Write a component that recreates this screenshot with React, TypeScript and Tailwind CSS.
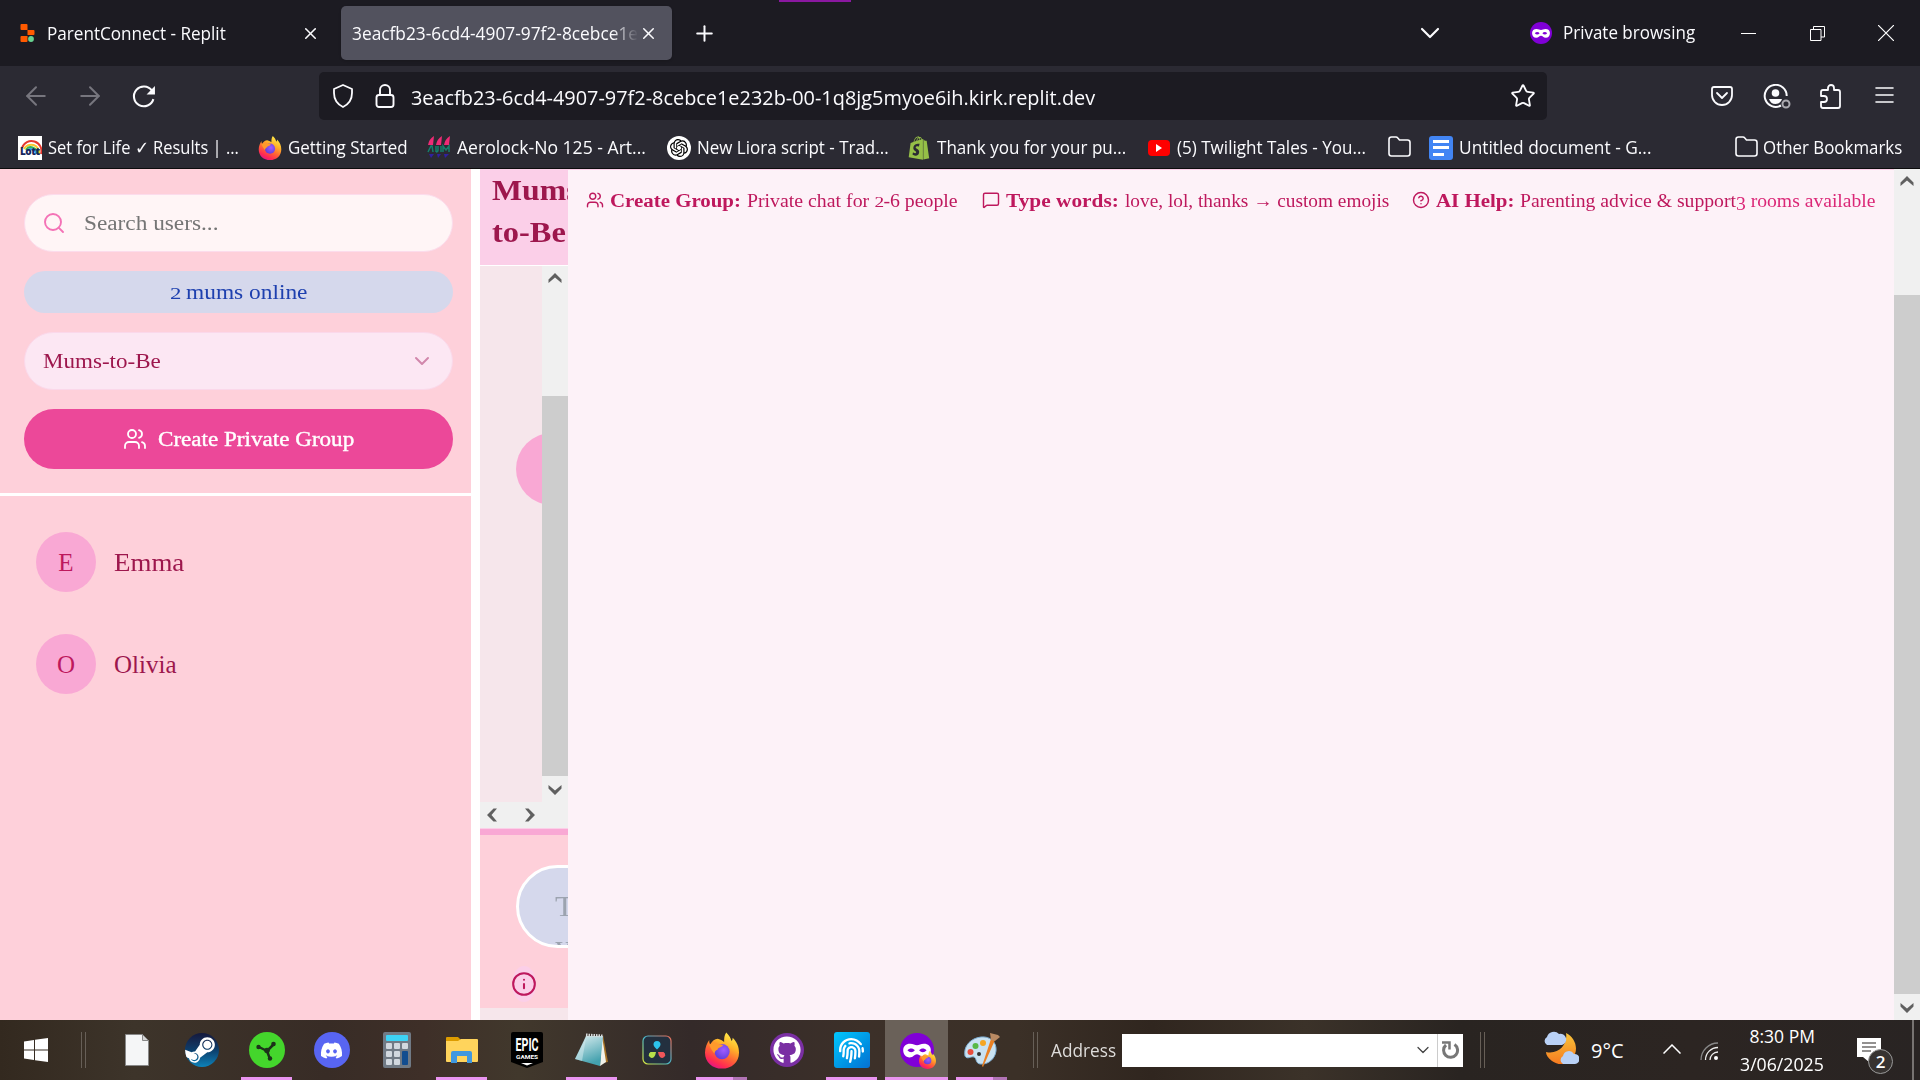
import { useLayoutEffect, useRef, type ReactNode } from "react";
import {
  Users, Search, ChevronDown, MessageSquare, CircleHelp, Info, Plus, X, ArrowLeft, ArrowRight, Star, Menu,
} from "lucide-react";
import { FaDiscord, FaGithub, FaShopify, FaSteamSymbol, FaFingerprint } from "react-icons/fa";
import { SiOpenai } from "react-icons/si";

/** A single line of text stretched to the width its class gives. */
function Fit({ className = "", children }: { className?: string; children: ReactNode }) {
  const outer = useRef<HTMLSpanElement>(null);
  const inner = useRef<HTMLSpanElement>(null);
  useLayoutEffect(() => {
    if (!outer.current || !inner.current) return;
    const ratio = outer.current.clientWidth / inner.current.offsetWidth;
    inner.current.style.transform = `scaleX(${ratio})`;
  }, []);
  return (
    <span ref={outer} className={`block shrink-0 whitespace-nowrap ${className}`}>
      <span ref={inner} className="inline-block origin-left">{children}</span>
    </span>
  );
}

function Firefox({ className }: { className: string }) {
  return (
    <svg viewBox="0 0 32 34" className={className}>
      <defs>
        <linearGradient id="fxBody" x1="0.8" y1="0" x2="0.3" y2="1">
          <stop offset="0" stopColor="#fff44f" />
          <stop offset="0.35" stopColor="#ffb329" />
          <stop offset="0.6" stopColor="#ff6a33" />
          <stop offset="0.85" stopColor="#ff2a52" />
          <stop offset="1" stopColor="#e31587" />
        </linearGradient>
        <radialGradient id="fxGlobe" cx="0.6" cy="0.4" r="0.7">
          <stop offset="0" stopColor="#a05cff" />
          <stop offset="1" stopColor="#5a3bd6" />
        </radialGradient>
      </defs>
      <path d="M20 0c3 3 4 5 5 8 1-1 1-2 1-3 4 4 6 8 6 14 0 9-7 15-16 15S0 28 0 19c0-5 2-9 4-12 0 2 0 3 1 4 2-3 4-5 7-5 3 1 5 2 6 3 0-4 0-6 2-9z" fill="url(#fxBody)" />
      <circle cx="16" cy="18" r="7.2" fill="url(#fxGlobe)" />
      <path d="M4 12c3-3 6-3 9-1 2 0 3 0 4 1-1 2-5 2-5 4-2 1-3 2-3 4-2-2-3-4-5-8z" fill="#ff9a2b" />
    </svg>
  );
}

function Mask({ className }: { className: string }) {
  return (
    <svg viewBox="0 0 32 32" className={className}>
      <circle cx="16" cy="16" r="16" fill="#8000d7" />
      <path fillRule="evenodd" fill="#fff" d="M9.5 10c3 0 4.500 1.500 6.500 1.500S19.500 10 22.500 10c4 0 6.500 2.300 6.500 6 0 4-2.500 7-6 7-3.500 0-4.500-3-7-3s-3.500 3-7 3c-3.500 0-6-3-6-7 0-3.700 2.500-6 6.500-6zM7 16.200c2 2.400 5 2.400 7 0-2-2.200-5-2.200-7 0zm11 0c2 2.400 5 2.400 7 0-2-2.200-5-2.200-7 0z" />
    </svg>
  );
}

function Folder() {
  return (
    <svg viewBox="0 0 23 21" className="h-[21px] w-[23px] shrink-0" fill="none" stroke="#fbfbfe" strokeWidth="1.6">
      <path d="M1 17.500V3.500Q1 1 3.500 1H8q1 0 1.600.8L11.500 4H19.500Q22 4 22 6.500V17.500Q22 20 19.500 20H3.500Q1 20 1 17.500z" strokeLinejoin="round" />
    </svg>
  );
}

function Arrow({ className = "" }: { className?: string }) {
  return (
    <svg viewBox="0 0 14 10" className={`h-[10px] w-[14px] ${className}`}>
      <path d="M7 0l6.500 6.500V10L7 4.500.5 10V6.500z" fill="#606060" />
    </svg>
  );
}

function TabBar() {
  return (
    <header className="relative flex h-[66px] items-center bg-[#1c1b22]">
      <div className="absolute left-[779px] top-0 h-[2px] w-[72px] bg-[#8a18a0]" />
      <svg viewBox="0 0 14 18" className="ml-5 h-[18px] w-[15px] shrink-0">
        <path d="M0 1q0-1 1-1h5q1 0 1 1v5H1Q0 6 0 5zM7 6h6q1 0 1 1v3q0 1-1 1H7zM0 13q0-1 1-1h6v5q0 1-1 1H1q-1 0-1-1z" fill="#ff5a00" />
        <circle cx="10.500" cy="15" r="2.900" fill="#68d391" />
      </svg>
      <Fit className="ml-3 w-[179px]">ParentConnect - Replit</Fit>
      <X className="ml-[75px] size-[19px] shrink-0" strokeWidth={1.9} />
      <div className="relative ml-[21px] flex h-[54px] w-[331px] shrink-0 items-center rounded-[5px] bg-[#52525e] pl-[11px] shadow">
        <div className="w-[286px] shrink-0 overflow-hidden [mask-image:linear-gradient(to_right,black_91%,transparent_100%)]">
          <Fit className="w-[286px]">3eacfb23-6cd4-4907-97f2-8cebce1e</Fit>
        </div>
        <X className="absolute right-[14px] size-[19px]" strokeWidth={1.9} />
      </div>
      <Plus className="ml-5 size-[25px] shrink-0" strokeWidth={1.9} />
      <ChevronDown className="ml-[697px] h-[32px] w-[32px] shrink-0" strokeWidth={1.6} />
      <Mask className="ml-[84px] size-[22px] shrink-0" />
      <Fit className="ml-[11px] w-[132px] pb-px">Private browsing</Fit>
      <div className="ml-[46px] h-px w-[15px] shrink-0 bg-white" />
      <svg viewBox="0 0 15 15" className="ml-[54px] size-[15px] shrink-0" fill="none" stroke="white">
        <path d="M.5 3.500h10.500v11H.5zM3.500 3.500v-3h11v10.500h-3.500" />
      </svg>
      <svg viewBox="0 0 16 16" className="ml-[53px] size-4 shrink-0" fill="none" stroke="white" strokeWidth="1.2">
        <path d="M0 0l16 16M16 0L0 16" />
      </svg>
    </header>
  );
}

function AddressBar() {
  return (
    <div className="flex h-[60px] items-center">
      <ArrowLeft className="ml-[21px] size-[30px] shrink-0 text-[#77767e]" strokeWidth={1.6} />
      <ArrowRight className="ml-[24px] size-[30px] shrink-0 text-[#77767e]" strokeWidth={1.6} />
      <svg viewBox="0 0 24 24" className="ml-[27px] size-[25px] shrink-0" fill="none" stroke="#fbfbfe" strokeWidth="2">
        <path d="M20.500 14.500A9.500 9.500 0 1 1 19 6.200" />
        <path d="M22 2v8h-8z" fill="#fbfbfe" stroke="none" />
      </svg>
      <div className="ml-[162px] flex h-[48px] w-[1228px] shrink-0 items-center rounded-[5px] bg-[#1c1b22]">
        <svg viewBox="0 0 22 24" className="ml-[13px] h-[24px] w-[22px] shrink-0" fill="none" stroke="#fbfbfe" strokeWidth="1.800" strokeLinejoin="round">
          <path d="M11 1l9 4v4c0 7-3 11-9 14C5 20 2 16 2 9V5z" />
        </svg>
        <svg viewBox="0 0 20 24" className="ml-[21px] h-[24px] w-[20px] shrink-0" fill="none" stroke="#fbfbfe" strokeWidth="1.900">
          <rect x="1.500" y="11" width="17" height="12" rx="2.500" />
          <path d="M5 11V6a5 5 0 0 1 10 0v5" />
        </svg>
        <Fit className="ml-4 w-[684px] pt-[2px] text-[20.5px]">3eacfb23-6cd4-4907-97f2-8cebce1e232b-00-1q8jg5myoe6ih.kirk.replit.dev</Fit>
        <Star className="ml-[415px] size-[26px] shrink-0" strokeWidth={1.7} />
      </div>
      <svg viewBox="0 0 22 20" className="ml-[164px] h-[20px] w-[22px] shrink-0" fill="none" stroke="#fbfbfe" strokeWidth="1.800" strokeLinecap="round" strokeLinejoin="round">
        <path d="M3 1h16q2 0 2 2v6a10 10 0 0 1-20 0V3q0-2 2-2z" />
        <path d="M6 7l5 5 5-5" />
      </svg>
      <svg viewBox="0 0 28 25" className="ml-[30px] h-[25px] w-[28px] shrink-0" fill="none">
        <path d="M18 21.500A11 11 0 1 1 23.700 12" stroke="#fbfbfe" strokeWidth="2" />
        <circle cx="12.500" cy="9" r="3.800" fill="#fbfbfe" />
        <path d="M6 15h13c-1 3-3 5-6.500 5S7 18 6 15z" fill="#fbfbfe" />
        <circle cx="23" cy="20" r="3.500" stroke="#aaa9b0" strokeWidth="2" />
      </svg>
      <svg viewBox="0 0 22 25" className="ml-[29px] h-[25px] w-[22px] shrink-0" fill="none" stroke="#fbfbfe" strokeWidth="1.800" strokeLinejoin="round">
        <path d="M3 6h5V4a3 3 0 0 1 6 0v2h4q2 0 2 2v14q0 2-2 2H3q-2 0-2-2v-4h3a3 3 0 0 0 0-6H1V8q0-2 2-2z" />
      </svg>
      <svg viewBox="0 0 19 18" className="ml-[33px] mt-[-2px] h-[18px] w-[19px] shrink-0" stroke="#fbfbfe" strokeWidth="1.600" strokeLinecap="round">
        <path d="M1 2h17M1 9h17M1 16h17" />
      </svg>
    </div>
  );
}

function Bookmarks() {
  return (
    <div className="flex h-[42px] items-center pt-px">
      <div className="ml-[18px] flex h-6 w-6 shrink-0 flex-col items-center justify-end overflow-hidden bg-white">
        <svg viewBox="0 0 24 24" className="size-6" fill="none" strokeWidth="2">
          <path d="M4 12a9 9 0 0 1 19 6" stroke="#e6392f" /><path d="M6 13a8 8 0 0 1 15 5" stroke="#f8c630" />
          <path d="M8 14a6 6 0 0 1 11 4" stroke="#36b558" /><path d="M10 14a5 5 0 0 1 8 4" stroke="#30a0e8" />
          <text x="2" y="19" fontSize="10" fontWeight="900" fill="#16265c" fontFamily="Open Sans, sans-serif" textLength="20">Lott</text>
        </svg>
      </div>
      <Fit className="ml-[6px] w-[191px]">Set for Life ✓ Results | ...</Fit>
      <Firefox className="ml-[19px] h-[24px] w-[24px] shrink-0" />
      <Fit className="ml-[6px] w-[120px]">Getting Started</Fit>
      <svg viewBox="0 0 24 24" className="ml-[19px] size-6 shrink-0">
        <path d="M1 9Q2 3 7 0L6 9zM9 9Q10 3 15 0L14 9zM17 9Q18 3 23 0L22 9z" fill="#ef2b76" />
        <path d="M1 16L4 10h1l1 6M9 10v6M11 10v4q0 2-2 2M14 10v6M16 16v-6l3 4 3-4v6" stroke="#14806c" strokeWidth="1.500" fill="none" />
        <path d="M2 18h5L4 22zM10 18h4l-3 4zM17 18h5l-4 4z" fill="#3020a0" />
      </svg>
      <Fit className="ml-[6px] w-[189px]">Aerolock-No 125 - Art...</Fit>
      <span className="ml-[21px] flex size-6 shrink-0 items-center justify-center rounded-full bg-white text-black"><SiOpenai className="size-[18px]" /></span>
      <Fit className="ml-[6px] w-[192px]">New Liora script - Trad...</Fit>
      <FaShopify className="ml-[18px] size-[24px] shrink-0 text-[#95bf47]" />
      <Fit className="ml-[6px] w-[189px]">Thank you for your pu...</Fit>
      <span className="ml-[22px] flex h-4 w-[22px] shrink-0 items-center justify-center rounded bg-[#ff0000]">
        <svg viewBox="0 0 6 8" className="h-[8px] w-[6px]"><path d="M0 0l6 4-6 4z" fill="white" /></svg>
      </span>
      <Fit className="ml-[7px] w-[189px]">(5) Twilight Tales - You...</Fit>
      <div className="ml-[22px] flex pb-[3px]"><Folder /></div>
      <span className="ml-[18px] flex size-6 shrink-0 flex-col justify-center gap-[3.500px] rounded-[3px] bg-[#4285f4] px-1">
        <i className="h-[3px] w-4 bg-white" /><i className="h-[3px] w-4 bg-white" /><i className="h-[3px] w-[11px] bg-white" />
      </span>
      <Fit className="ml-[6px] w-[192px]">Untitled document - G...</Fit>
      <div className="ml-[84px] flex pb-[3px]"><Folder /></div>
      <Fit className="ml-[5px] w-[139px]">Other Bookmarks</Fit>
    </div>
  );
}

function Person({ name, width }: { name: string; width: string }) {
  return (
    <div className="flex h-[60px] items-center gap-[18px] text-[25px] text-[#9d174d]">
      <span className="flex size-[60px] items-center justify-center rounded-full bg-[#f9a8d4] pt-[2px] text-[#be185d]">{name[0]}</span>
      <Fit className={`pt-[2px] ${width}`}>{name}</Fit>
    </div>
  );
}

function Sidebar() {
  return (
    <aside className="flex w-[480px] shrink-0 flex-col border-r-[9px] border-white bg-[#fed0da] text-[20.5px]">
      <div className="flex h-[327px] shrink-0 flex-col border-b-[3px] border-white pl-6 pr-[18px] pt-[25px]">
        <div className="flex h-[58px] shrink-0 items-center rounded-full border border-[#fcdcec] bg-[#fff5f6] text-[#757575]">
          <Search className="ml-[17px] size-[24px] text-[#f472b6]" strokeWidth={1.9} />
          <Fit className="ml-[18px] w-[134px]">Search users...</Fit>
        </div>
        <div className="mt-[19px] flex h-[42px] shrink-0 items-center justify-center rounded-full bg-[#d5d8ec] text-[#1e40af]">
          <Fit className="w-[138px]"><span className="inline-block w-[0.56em] origin-left scale-x-125 text-[0.78em]">2</span>&nbsp;mums online</Fit>
        </div>
        <div className="mt-[19px] flex h-[58px] shrink-0 items-center justify-between rounded-full border border-[#fbd8ea] bg-[#fce7f3] pl-[18px] pr-[18px] text-[#9d174d]">
          <Fit className="w-[118px]">Mums-to-Be</Fit>
          <ChevronDown className="size-[24px] text-[#d187ab]" strokeWidth={2} />
        </div>
        <div className="mt-[19px] flex h-[60px] shrink-0 items-center justify-center rounded-full bg-[#ec4899] font-medium text-white">
          <Users className="size-[24px]" strokeWidth={1.8} />
          <Fit className="ml-[11px] w-[196px] [-webkit-text-stroke:0.4px_white]">Create Private Group</Fit>
        </div>
      </div>
      <div className="flex flex-col gap-[42px] pl-9 pt-9">
        <Person name="Emma" width="w-[70px]" />
        <Person name="Olivia" width="w-[63px]" />
      </div>
    </aside>
  );
}

function ChatColumn() {
  return (
    <section className="flex w-[88px] shrink-0 flex-col overflow-hidden bg-[#f6e6eb]">
      <div className="h-[97px] shrink-0 overflow-hidden border-b border-white bg-[#fbcfe8] pl-3 pt-px text-[28.500px] font-bold leading-[42px] text-[#9d174d]">
        <Fit className="w-[87px]">Mums</Fit>
        <Fit className="w-[74px]">to-Be</Fit>
      </div>
      <div className="flex h-[536px] shrink-0">
        <div className="w-[62px] overflow-hidden pl-9 pt-[167px]">
          <div className="size-[72px] rounded-full bg-[#f9a8d4]" />
        </div>
        <div className="flex w-[26px] flex-col items-center bg-[#f0f0f0] pt-[7px]">
          <Arrow />
          <div className="mt-[113px] h-[380px] w-[26px] shrink-0 bg-[#cdcdcd]" />
          <Arrow className="mt-[9px] shrink-0 rotate-180" />
        </div>
      </div>
      <div className="flex h-[26px] shrink-0 items-center gap-6 bg-[#f0f0f0] pl-[5px]">
        <Arrow className="-rotate-90" />
        <Arrow className="rotate-90" />
      </div>
      <div className="h-[180px] shrink-0 border-t border-[#fbcfe8] bg-[#fed0da]">
        <div className="h-[6px] bg-[#f9a8d4]" />
        <div className="ml-9 mt-[30px] h-[83px] w-[200px] overflow-hidden rounded-full border-[3px] border-white bg-[#d5d8ec] pl-9 pt-[17px] text-[29px] leading-[42px] text-[#9ca3af]">
          <Fit className="w-[64px]">Type</Fit>
          <Fit className="-mt-[2px] w-[60px]">your</Fit>
        </div>
        <div className="ml-8 mt-[18px] flex h-9 w-6 items-center justify-center rounded-[50%] bg-[#fbcfe8]">
          <Info className="size-[26px] shrink-0 text-[#be185d]" strokeWidth={1.9} />
        </div>
      </div>
    </section>
  );
}

function Main() {
  return (
    <main className="flex h-full flex-1 items-start border-t border-[#fbcfe8] bg-[#fdf2f8] pl-[18px] pt-[19px] text-[18.500px] leading-6 text-[#be185d]">
      <Users className="mt-[2px] size-[18px] shrink-0" strokeWidth={1.9} />
      <Fit className="ml-[6px] w-[131px] font-bold">Create Group:</Fit>
      <Fit className="ml-[6px] w-[211px]">Private chat for <span className="inline-block w-[0.6em] origin-left scale-x-125 text-[0.78em]">2</span>-6 people</Fit>
      <MessageSquare className="ml-[24px] mt-[2px] size-[18px] shrink-0" strokeWidth={1.9} />
      <Fit className="ml-[6px] w-[113px] font-bold">Type words:</Fit>
      <Fit className="ml-[6px] w-[264px]">love, lol, thanks → custom emojis</Fit>
      <CircleHelp className="ml-[23px] mt-[2px] size-[18px] shrink-0" strokeWidth={1.9} />
      <Fit className="ml-[6px] w-[78px] font-bold">AI Help:</Fit>
      <Fit className="ml-[6px] w-[216px]">Parenting advice &amp; support</Fit>
      <Fit className="w-[140px] text-[#db2777]"><span className="relative top-[3px]">3</span> rooms available</Fit>
    </main>
  );
}

function TaskItem({ children, bar = "none" }: { children: ReactNode; bar?: "none" | "full" | "split" | "active" }) {
  return (
    <div className="flex h-[60px] w-[65px] shrink-0 flex-col items-center">
      <div className={`flex h-[57px] items-center justify-center pt-[3px] ${bar === "active" ? "w-[63px] bg-[#6a6159]" : "w-full"}`}>{children}</div>
      {bar === "full" && <div className="h-[3px] w-[51px] bg-[#e994f0]" />}
      {bar === "active" && <div className="h-[3px] w-[63px] bg-[#e994f0]" />}
      {bar === "split" && <div className="flex"><div className="h-[3px] w-[37px] bg-[#e994f0]" /><div className="h-[3px] w-[14px] bg-[#b173b5]" /></div>}
    </div>
  );
}

function Separator({ className }: { className: string }) {
  return <div className={`h-9 w-[5px] shrink-0 border-x border-[#675f57] ${className}`} />;
}

function Taskbar() {
  return (
    <footer className="relative flex h-[60px] items-center bg-[linear-gradient(90deg,#33291f,#3d342a_7%,#382c26_17%,#3e2f28_22%,#41382c_27%,#342a29_36%,#3c3029_45%,#3b3027_53%,#30261f_60%,#3b3229_68%,#292421_76%,#2c2522_88%,#292423)] text-white">
      <svg viewBox="0 0 24 24" className="ml-6 size-6 shrink-0" fill="white">
        <path d="M0 3.400L10 2v9.500H0zM11 1.800L24 0v11.500H11zM0 12.500h10V22L0 20.600zM11 12.500h13V24l-13-1.800z" />
      </svg>
      <Separator className="ml-[33px]" />
      <div className="ml-[18px] flex">
        <TaskItem>
          <svg viewBox="0 0 24 32" className="h-8 w-6"><path d="M.5.5h17l6 6v25H.5z" fill="#f5f6f7" stroke="#888" /><path d="M17.500.5v6h6z" fill="#d5d5d5" stroke="#888" /></svg>
        </TaskItem>
        <TaskItem>
          <span className="flex size-[34px] items-center justify-center overflow-hidden rounded-full bg-linear-to-b from-[#14193d] via-[#0b3e6b] to-[#0d83ba]"><FaSteamSymbol className="-ml-1 size-[34px]" /></span>
        </TaskItem>
        <TaskItem bar="full">
          <svg viewBox="0 0 36 36" className="size-9">
            <circle cx="18" cy="18" r="18" fill="#44d62c" />
            <path d="M18 19L10 15M18 19l7-7M18 19l3 8" stroke="#1c321a" strokeWidth="2.500" />
            <g fill="#1c321a"><circle cx="9.500" cy="15" r="2.200" /><circle cx="24.500" cy="12" r="2.300" /><circle cx="21" cy="26.500" r="2.200" /><circle cx="18" cy="18.500" r="2.800" /></g>
          </svg>
        </TaskItem>
        <TaskItem><span className="flex size-9 items-center justify-center rounded-full bg-[#5865f2]"><FaDiscord className="size-[23px]" /></span></TaskItem>
        <TaskItem>
          <svg viewBox="0 0 28 36" className="h-9 w-7">
            <rect width="28" height="36" rx="2" fill="#707a85" /><rect x="3" y="3" width="22" height="6" rx="1" fill="#3dd3f5" />
            <g fill="#d1d8df"><rect x="3" y="11" width="6" height="6" rx="1" /><rect x="11" y="11" width="6" height="6" rx="1" /><rect x="19" y="11" width="6" height="6" rx="1" /><rect x="3" y="19" width="6" height="6" rx="1" /><rect x="11" y="19" width="6" height="6" rx="1" /><rect x="3" y="27" width="6" height="6" rx="1" /><rect x="11" y="27" width="6" height="6" rx="1" /></g>
            <rect x="19" y="19" width="6" height="14" rx="1" fill="#124d8f" />
          </svg>
        </TaskItem>
        <TaskItem bar="full">
          <svg viewBox="0 0 32 27" className="h-[27px] w-8"><path d="M0 1q0-1 1-1h11l3 3v4H0z" fill="#dd9c00" /><path d="M0 4h12l3-2h16q1 0 1 1v21q0 1-1 1H1q-1 0-1-1z" fill="#ffd45c" /><path d="M5 26V16q0-2 2-2h17q2 0 2 2v10h-5v-7H11v7z" fill="#3f98df" /></svg>
        </TaskItem>
        <TaskItem>
          <svg viewBox="0 0 32 36" className="h-9 w-8">
            <path d="M2 0h28q2 0 2 2v28l-16 6L0 30V2Q0 0 2 0z" fill="#000" />
            <text x="4.500" y="19" fontSize="19" fontWeight="700" fill="#fff" fontFamily="Roboto, sans-serif" textLength="23" lengthAdjust="spacingAndGlyphs">EPIC</text>
            <text x="5" y="27" fontSize="6" fontWeight="700" fill="#fff" fontFamily="Roboto, sans-serif" textLength="22" lengthAdjust="spacingAndGlyphs">GAMES</text>
            <path d="M10 31h12l-6 2.500z" fill="#fff" />
          </svg>
        </TaskItem>
        <TaskItem bar="full">
          <svg viewBox="0 0 33 34" className="h-[34px] w-[33px]">
            <defs><linearGradient id="pad" x1="0" y1="0" x2="0.4" y2="1"><stop offset="0" stopColor="#e0f0f2" /><stop offset="1" stopColor="#43a1ae" /></linearGradient></defs>
            <path d="M28 2l5 27-6 1z" fill="#a77427" /><path d="M27 3l4 26-6 4z" fill="#f2f2ea" /><path d="M11 3h17l-3 30L0 26z" fill="url(#pad)" /><path d="M11 2l17 1" stroke="#d8dcdd" strokeWidth="3" strokeDasharray="1.500 1" /><path d="M11 5L0 26l7 2z" fill="#d9eef1" fillOpacity="0.5" />
          </svg>
        </TaskItem>
        <TaskItem>
          <svg viewBox="0 0 30 30" className="size-[30px]">
            <defs><linearGradient id="dv" x1="0" y1="1" x2="1" y2="0"><stop offset="0" stopColor="#e1ec39" /><stop offset="0.5" stopColor="#45b6cc" /><stop offset="1" stopColor="#f36b54" /></linearGradient></defs>
            <rect x="1" y="1" width="28" height="28" rx="5" fill="#23303f" stroke="url(#dv)" strokeWidth="1.200" />
            <path d="M15 14.500q-3.500-3-3.500-5a3.500 3.500 0 0 1 7 0q0 2-3.500 5z" fill="#2cc3ec" /><path d="M14 17q-1 6-4.500 6a3.200 3.200 0 0 1-1-6z" fill="#b8e04a" /><path d="M16 17q1 6 4.500 6a3.200 3.200 0 0 0 1-6z" fill="#f0565a" />
          </svg>
        </TaskItem>
        <TaskItem bar="split"><Firefox className="h-[37px] w-[34px]" /></TaskItem>
        <TaskItem><span className="flex size-[34px] items-center justify-center rounded-full bg-[#7a2fa3]"><FaGithub className="size-[28px]" /></span></TaskItem>
        <TaskItem bar="full"><span className="flex size-9 items-center justify-center rounded-[3px] bg-linear-to-br from-[#00c8ff] to-[#0870d0]"><FaFingerprint className="size-[25px]" /></span></TaskItem>
        <TaskItem bar="active">
          <span className="relative flex"><Mask className="size-[34px]" /><Firefox className="absolute -bottom-[2px] -right-[2px] h-[18px] w-[17px]" /></span>
        </TaskItem>
        <TaskItem bar="split">
          <svg viewBox="0 0 36 36" className="size-9">
            <path d="M17 5c9-1 16 5 15 14-1 8-8 14-16 13-5-1-3-6-6-7s-7 3-9-1C-1 14 7 6 17 5z" fill="#c9e2f2" stroke="#7fb0d6" />
            <circle cx="6.500" cy="20" r="3" fill="#e84d3d" /><circle cx="11.500" cy="14" r="3" fill="#57b947" /><circle cx="19" cy="11" r="3" fill="#f5a623" /><circle cx="15" cy="22" r="2" fill="#333" />
            <path d="M31 8L19 35l-1-1 9-27z" fill="#e98024" /><path d="M26 1l8 2 2 2-5 4-4-1z" fill="#b98a63" />
          </svg>
        </TaskItem>
      </div>
      <Separator className="ml-[19px]" />
      <Fit className="ml-[13px] w-[65px] text-[17.500px] text-[#dedcda]">Address</Fit>
      <div className="ml-[6px] flex h-[33px] w-[341px] shrink-0 items-center bg-white text-[#444]">
        <ChevronDown className="ml-[291px] size-[20px]" strokeWidth={1.5} />
        <div className="ml-1 flex h-full flex-1 items-center justify-center border-l border-[#ccc]">
          <svg viewBox="0 0 18 18" className="size-[18px]" fill="none" stroke="#777" strokeWidth="3"><path d="M4 4A7 7 0 1 0 12.500 3.500" /><path d="M0 1.500h7.500v7" strokeWidth="2.500" /></svg>
        </div>
      </div>
      <Separator className="ml-[17px]" />
      <svg viewBox="0 0 36 34" className="ml-[58px] mt-[-4px] h-[34px] w-9 shrink-0">
        <defs><linearGradient id="moon" x1="0" y1="0" x2="0" y2="1"><stop offset="0" stopColor="#f8c53a" /><stop offset="1" stopColor="#f67a20" /></linearGradient></defs>
        <path d="M23 2c8 4 12 13 9 21-4 10-15 13-23 7-4-3-6-6-6-9 13 3 22-8 20-19z" fill="url(#moon)" />
        <path d="M4 14a4.500 4.500 0 0 1 0-8 7 7 0 0 1 12-3 5.500 5.500 0 0 1 3 11z" fill="#b9d1f6" />
        <path d="M20 33a4.500 4.500 0 0 1 0-8 6 6 0 0 1 11-2 5 5 0 0 1 1 10z" fill="#b9d1f6" />
      </svg>
      <Fit className="ml-3 mt-[2px] w-[33px] text-[20px]">9°C</Fit>
      <svg viewBox="0 0 18 10" className="ml-[39px] mt-[-2px] h-[10px] w-[18px] shrink-0" fill="none" stroke="white" strokeWidth="1.500"><path d="M.5 9.500L9 1l8.500 8.500" /></svg>
      <svg viewBox="0 0 18 18" className="ml-[19px] mt-[2px] size-[18px] shrink-0" fill="none" strokeWidth="1.300">
        <path d="M1 18A17 17 0 0 1 18 1" stroke="#888" /><path d="M5.500 18A12.500 12.500 0 0 1 18 5.500M10 18a8 8 0 0 1 8-8" stroke="#eee" /><circle cx="16" cy="16" r="2" fill="#fff" />
      </svg>
      <div className="ml-[22px] flex w-[84px] shrink-0 flex-col items-center text-[17.500px] leading-7">
        <Fit className="w-[65px]">8:30 PM</Fit>
        <Fit className="w-[84px]">3/06/2025</Fit>
      </div>
      <div className="relative ml-[33px] size-9 shrink-0">
        <svg viewBox="0 0 24 24" className="mt-[6px] size-6"><path d="M0 0h24v19H12v5l-6-5H0z" fill="#fff" /><path d="M5 5h14M5 9h14M5 13h9" stroke="#292423" strokeWidth="1.200" /></svg>
        <span className="absolute left-[11px] top-[17px] flex size-[25px] items-center justify-center rounded-full border border-[#999] bg-[#373331] text-[17px] font-semibold">2</span>
      </div>
      <div className="absolute right-[6px] top-0 h-[60px] w-[2px] bg-[#777371]" />
    </footer>
  );
}

export default function App() {
  return (
    <div className="flex h-[1080px] w-[1920px] flex-col overflow-hidden font-['Open_Sans',sans-serif] text-[17.500px] text-[#fbfbfe]">
      <TabBar />
      <div className="h-[103px] shrink-0 border-b border-[#0c0c0d] bg-[#2b2a33]">
        <AddressBar />
        <Bookmarks />
      </div>
      <div className="flex h-[851px] shrink-0 font-['Liberation_Serif',serif]">
        <Sidebar />
        <ChatColumn />
        <Main />
        <div className="flex w-[26px] shrink-0 flex-col items-center bg-[#f0f0f0] pt-[7px]">
          <Arrow />
          <div className="mt-[109px] h-[699px] w-[26px] shrink-0 bg-[#cdcdcd]" />
          <Arrow className="mt-[9px] shrink-0 rotate-180" />
        </div>
      </div>
      <Taskbar />
    </div>
  );
}
